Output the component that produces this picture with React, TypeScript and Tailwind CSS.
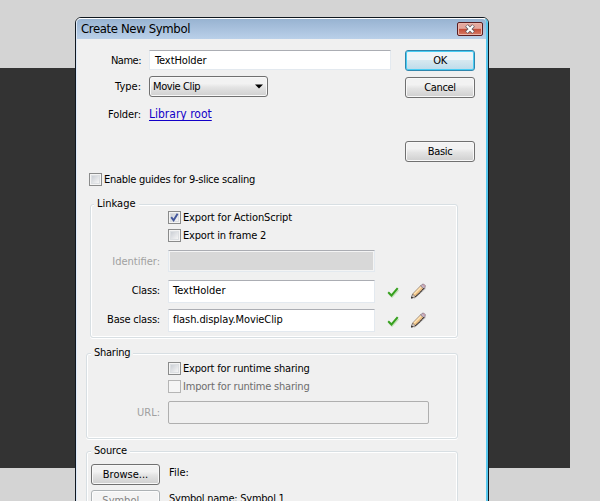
import type { ReactNode } from "react";
import clsx from "clsx";

interface ButtonProps {
  children: ReactNode;
  className?: string;
  primary?: boolean;
  disabled?: boolean;
}

const Button = ({ children, className, primary, disabled }: ButtonProps) => (
  <button
    className={clsx(
      "flex h-[21px] shrink-0 items-center justify-center rounded-[3px] border leading-none",
      primary
        ? "border-[#2f86ad] bg-linear-to-b from-[#eef5f8] from-45% via-[#d6e8f0] via-50% to-[#bcdbea] shadow-[inset_0_0_0_1px_#48cdf4]"
        : disabled
          ? "border-[#adb2b5] bg-[#f4f4f4] text-[#838383] shadow-[inset_0_0_0_1px_#fcfcfc]"
          : "border-[#707070] bg-linear-to-b from-[#f2f2f2] from-35% via-[#e3e3e3] via-55% to-[#cfcfcf] shadow-[inset_0_0_0_1px_#f8f8f8]",
      className,
    )}
  >
    {children}
  </button>
);

interface CheckboxProps {
  label: string;
  checked?: boolean;
  disabled?: boolean;
  className?: string;
}

const Checkbox = ({ label, checked, disabled, className }: CheckboxProps) => (
  <div className={clsx("flex h-[13px] items-center gap-[2px]", disabled && "text-[#6d6d6d]", className)}>
    <span
      className={clsx(
        "flex size-[13px] shrink-0 border p-[2px]",
        disabled ? "border-[#b5b5b5] bg-[#f5f5f5]" : "border-[#8a8b8b] bg-[#f4f4f4]",
      )}
    >
      <span
        className={clsx(
          "flex size-[7px]",
          !disabled && "bg-linear-to-br from-[#cbcfd5] to-[#f6f6f6] shadow-[0_0_0_1px_#dcdfe2]",
        )}
      >
        {checked && (
          <svg className="size-[9px] shrink-0 -translate-x-px -translate-y-px" viewBox="0 0 9 9">
            <path d="M1.2 4.2 3.6 7.3 7.6.8" fill="none" stroke="#42569b" strokeWidth="1.9" />
          </svg>
        )}
      </span>
    </span>
    <span>{label}</span>
  </div>
);

interface GroupProps {
  title: string;
  className?: string;
  legendClass?: string;
  children: ReactNode;
}

const Group = ({ title, className, legendClass, children }: GroupProps) => (
  <section
    className={clsx(
      "flex flex-col rounded-[3px] border border-[#d8dfe3] shadow-[inset_0_0_0_1px_#ffffff,0_1px_0_#ffffff]",
      className,
    )}
  >
    <h2 className={clsx("-mt-[8px] h-[14px] self-start bg-[#f0f0f0] leading-[14px]", legendClass)}>{title}</h2>
    {children}
  </section>
);

interface FieldProps {
  value?: string;
  className?: string;
}

const Field = ({ value, className }: FieldProps) => (
  <div
    className={clsx(
      "flex shrink-0 items-center border border-[#e3e9ef] border-t-[#abadb3] bg-white",
      className,
    )}
  >
    {value}
  </div>
);

const CheckMark = () => (
  <svg className="ml-[12px] h-[12px] w-[13px] shrink-0" viewBox="0 0 13 12">
    <path d="M2 8 5 11 11.5 4" fill="none" stroke="#c2dfb9" strokeWidth="1.6" />
    <path d="M1.2 6.3 4.5 9.5 10.7 2.2" fill="none" stroke="#36a01e" strokeWidth="2" />
  </svg>
);

const Pencil = () => (
  <svg className="ml-[10px] h-[17px] w-[17px] shrink-0" viewBox="0 0 17 17">
    <path d="M3.5 15.5 15.5 5" stroke="#d2d2d2" strokeWidth="2" />
    <path d="M1.5 15 2.6 11 11.2 2.2 14.3 5.1 5.4 13.8Z" fill="#edc084" stroke="#8d8078" strokeWidth=".8" />
    <path d="M4.2 11 11.4 3.8" stroke="#ffe4b5" strokeWidth="1.4" />
    <path d="M10.6 2.9 12.2 1.3 13.9 1.2 15.3 2.6 15.1 4.3 13.6 5.8Z" fill="#c5b5c5" stroke="#7c6f7d" strokeWidth=".7" />
    <path d="M12.9 1.4 15.1 3.5" stroke="#d3929b" />
    <path d="M1.5 15 2.6 11 5.4 13.8Z" fill="#dcd2cc" stroke="#766d69" strokeWidth=".7" />
    <path d="M5.4 13.9 14.3 5.2" stroke="#211c1b" strokeWidth="1.1" strokeDasharray="1.1 .5" />
    <path d="M1 15.6 1.6 13.5 3.2 14.9Z" fill="#171717" />
  </svg>
);

const labelClass = "shrink-0 text-right";

const App = () => (
  <div className="relative h-[501px] w-[600px] overflow-hidden bg-[#d4d4d4] pt-[68px] font-['DejaVu_Sans_Condensed','DejaVu_Sans',sans-serif] text-[11px] leading-[13px] text-black [font-stretch:condensed]">
    <div className="h-[400px] w-[570px] bg-[#333333]" />

    <div className="absolute top-[17px] left-[75px] h-[520px] w-[414px] rounded-t-[6px] border border-[#101820] bg-[#f0f0f0]">
      <div className="flex h-full flex-col rounded-t-[5px] border-t border-r-2 border-l border-t-white border-r-[#58c8ee] border-l-[#dce8f8]">
        <header className="flex h-[20px] shrink-0 items-center justify-between rounded-t-[4px] bg-linear-to-b from-[#98b3d1] to-[#bad0e9] pr-[3px] pl-[4px]">
          <h1 className="-mt-px text-[13px] tracking-[-0.37px]">Create New Symbol</h1>
          <button className="flex h-[14px] w-[26px] items-center justify-center rounded-[2px] border border-[#5a1f22] bg-linear-to-b from-[#e4a79d] from-45% via-[#c34b37] via-50% to-[#d67c68] shadow-[inset_0_0_0_1px_#e9b5ab]">
            <svg className="h-[10px] w-[12px]" viewBox="0 0 12 10">
              <path d="M2.5 1.5 9.5 8.5M9.5 1.5 2.5 8.5" stroke="#5d5a62" strokeWidth="3.8" />
              <path d="M2.8 1.8 9.2 8.2M9.2 1.8 2.8 8.2" stroke="#ffffff" strokeWidth="2.2" />
            </svg>
          </button>
        </header>

        <div className="flex h-[134px] shrink-0 justify-between pt-[11px] pr-[11px]">
          <div className="flex flex-col">
            <div className="flex h-[20px] items-center gap-[8px]">
              <span className={`${labelClass} w-[64px] tracking-[-0.5px]`}>Name:</span>
              <Field value="TextHolder" className="h-[20px] w-[242px] pl-[5px] tracking-[-0.1px]" />
            </div>
            <div className="mt-[6px] flex h-[21px] items-center gap-[8px]">
              <span className={`${labelClass} w-[64px]`}>Type:</span>
              <Button className="w-[119px] justify-between! pr-[4px] pl-[3px]">
                <span className="tracking-[-0.4px]">Movie Clip</span>
                <svg className="h-[5px] w-[8px]" viewBox="0 0 8 5">
                  <path d="M0 .5H8L4 4.5Z" />
                </svg>
              </Button>
            </div>
            <div className="mt-[10px] flex h-[15px] items-center gap-[8px]">
              <span className={`${labelClass} w-[64px] tracking-[-0.1px]`}>Folder:</span>
              <a className="text-[12px] text-[#1200c8] underline underline-offset-2">Library root</a>
            </div>
          </div>
          <div className="flex flex-col">
            <Button primary className="w-[70px] tracking-[-0.4px]">OK</Button>
            <Button className="mt-[6px] w-[70px] tracking-[-0.35px]">Cancel</Button>
            <Button className="mt-[43px] w-[70px] tracking-[-0.3px]">Basic</Button>
          </div>
        </div>

        <Checkbox label="Enable guides for 9-slice scaling" className="ml-[12px] tracking-[-0.26px]" />

        <Group title="Linkage" className="mt-[18px] ml-[13px] h-[134px] w-[368px] shrink-0" legendClass="ml-[3px] px-[3px]">
          <Checkbox label="Export for ActionScript" checked className="ml-[77px] tracking-[-0.13px]" />
          <Checkbox label="Export in frame 2" className="mt-[5px] ml-[77px] tracking-[-0.2px]" />
          <div className="mt-[8px] flex h-[22px] items-center">
            <span className={`${labelClass} w-[69px] text-[#a0a0a0]`}>Identifier:</span>
            <Field className="ml-[8px] h-[22px] w-[207px] bg-[#d8d8d8]! shadow-[inset_0_0_0_1px_#f4f4f4]" />
          </div>
          <div className="mt-[8px] flex h-[23px] items-center">
            <span className={`${labelClass} w-[69px] pb-[2px] tracking-[-0.2px]`}>Class:</span>
            <Field value="TextHolder" className="ml-[8px] h-[23px] w-[207px] pb-[2px] pl-[4px]" />
            <CheckMark />
            <Pencil />
          </div>
          <div className="mt-[6px] flex h-[23px] items-center">
            <span className={`${labelClass} w-[69px] pb-[2px] tracking-[-0.2px]`}>Base class:</span>
            <Field value="flash.display.MovieClip" className="ml-[8px] h-[23px] w-[207px] pb-[2px] pl-[4px] tracking-[-0.08px]" />
            <CheckMark />
            <Pencil />
          </div>
        </Group>

        <Group title="Sharing" className="mt-[15px] ml-[9px] h-[86px] w-[372px] shrink-0" legendClass="ml-[4px] px-[3px] tracking-[-0.25px]">
          <Checkbox label="Export for runtime sharing" className="mt-[2px] ml-[81px] tracking-[-0.18px]" />
          <Checkbox label="Import for runtime sharing" disabled className="mt-[5px] ml-[81px] tracking-[-0.2px]" />
          <div className="mt-[8px] flex h-[23px] items-center">
            <span className={`${labelClass} w-[73px] text-[#a0a0a0]`}>URL:</span>
            <Field className="ml-[8px] h-[23px] w-[261px] rounded-[2px] border-[#afafaf]! bg-[#f0f0f0]!" />
          </div>
        </Group>

        <Group title="Source" className="mt-[12px] ml-[9px] h-[86px] w-[372px] shrink-0" legendClass="ml-[4px] px-[3px] tracking-[-0.2px]">
          <div className="mt-[6px] ml-[4px] flex h-[21px]">
            <Button className="w-[69px]">Browse...</Button>
            <span className="mt-[2px] ml-[9px]">File:</span>
          </div>
          <div className="mt-[5px] ml-[4px] flex h-[21px]">
            <Button disabled className="w-[69px]">Symbol...</Button>
            <span className="mt-[2px] ml-[9px] tracking-[-0.25px]">Symbol name: Symbol 1</span>
          </div>
        </Group>
      </div>
    </div>
  </div>
);

export default App;
